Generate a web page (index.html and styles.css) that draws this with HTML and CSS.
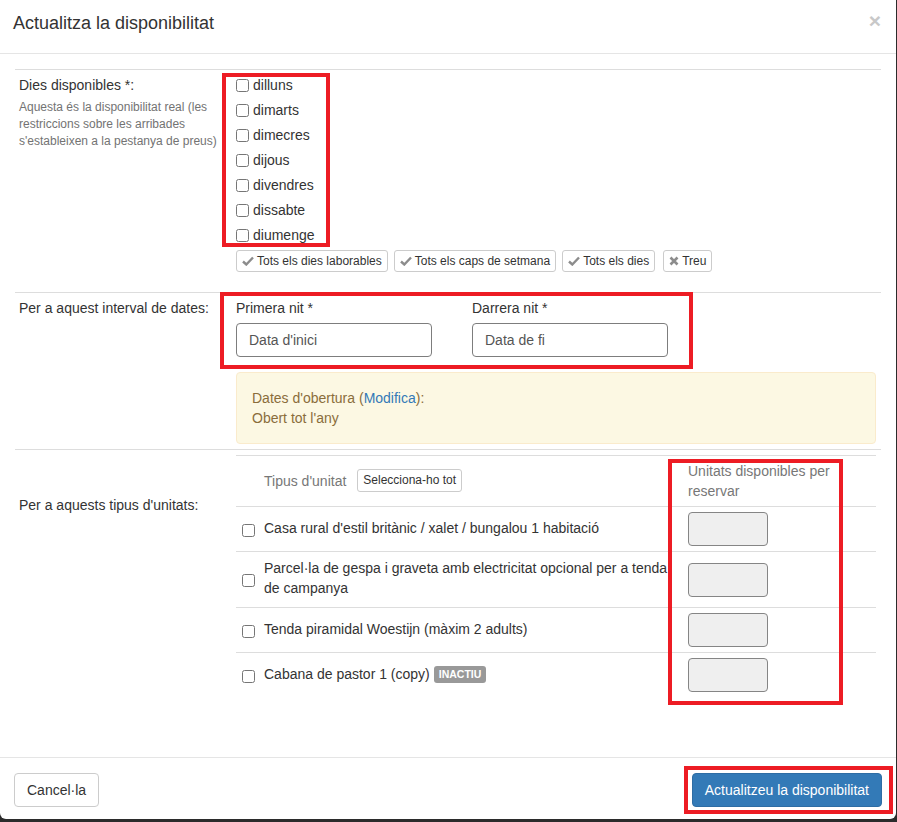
FILE: index.html
```html
<!DOCTYPE html>
<html lang="ca">
<head>
<meta charset="utf-8">
<title>Actualitza la disponibilitat</title>
<link rel="stylesheet" href="styles.css">
</head>
<body>
<div class="modal">
  <div class="modal-header">
    <h4 class="modal-title">Actualitza la disponibilitat</h4>
    <span class="close">&times;</span>
  </div>
  <div class="modal-body">
    <div class="form-row row-days">
      <div class="label-col">
        <div class="lbl">Dies disponibles *:</div>
        <div class="help">Aquesta és la disponibilitat real (les<br>restriccions sobre les arribades<br>s'estableixen a la pestanya de preus)</div>
      </div>
      <div class="field-col">
        <div class="days">
          <label class="day"><input type="checkbox"><span>dilluns</span></label>
          <label class="day"><input type="checkbox"><span>dimarts</span></label>
          <label class="day"><input type="checkbox"><span>dimecres</span></label>
          <label class="day"><input type="checkbox"><span>dijous</span></label>
          <label class="day"><input type="checkbox"><span>divendres</span></label>
          <label class="day"><input type="checkbox"><span>dissabte</span></label>
          <label class="day"><input type="checkbox"><span>diumenge</span></label>
          <div class="hl hl-days"></div>
        </div>
        <div class="quick">
          <button class="btn-xs"><svg class="ico" viewBox="0 0 12 10" width="12" height="10"><path d="M1 5.5 L4.3 8.5 L11 1.5" fill="none" stroke="#8c8c8c" stroke-width="2.4"/></svg>Tots els dies laborables</button>
          <button class="btn-xs"><svg class="ico" viewBox="0 0 12 10" width="12" height="10"><path d="M1 5.5 L4.3 8.5 L11 1.5" fill="none" stroke="#8c8c8c" stroke-width="2.4"/></svg>Tots els caps de setmana</button>
          <button class="btn-xs"><svg class="ico" viewBox="0 0 12 10" width="12" height="10"><path d="M1 5.5 L4.3 8.5 L11 1.5" fill="none" stroke="#8c8c8c" stroke-width="2.4"/></svg>Tots els dies</button>
          <button class="btn-xs btn-treu"><svg class="ico" viewBox="0 0 10 10" width="10" height="10"><path d="M1.5 1.5 L8.5 8.5 M8.5 1.5 L1.5 8.5" fill="none" stroke="#8c8c8c" stroke-width="2.6"/></svg>Treu</button>
        </div>
      </div>
    </div>

    <div class="form-row row-dates">
      <div class="label-col">
        <div class="lbl">Per a aquest interval de dates:</div>
      </div>
      <div class="field-col">
        <div class="dates">
          <div class="date-field">
            <div class="lbl">Primera nit *</div>
            <div class="input">Data d'inici</div>
          </div>
          <div class="date-field">
            <div class="lbl">Darrera nit *</div>
            <div class="input">Data de fi</div>
          </div>
          <div class="hl hl-dates"></div>
        </div>
        <div class="alert">
          <div>Dates d'obertura (<a class="link">Modifica</a>):</div>
          <div>Obert tot l'any</div>
        </div>
      </div>
    </div>

    <div class="form-row row-units">
      <div class="label-col">
        <div class="lbl units-lbl">Per a aquests tipus d'unitats:</div>
      </div>
      <div class="field-col">
        <div class="utable">
          <div class="urow uhead">
            <div class="c1"></div>
            <div class="c2 muted">Tipus d'unitat <button class="btn-sel">Selecciona-ho tot</button></div>
            <div class="c3 muted">Unitats disponibles per<br>reservar</div>
          </div>
          <div class="urow">
            <div class="c1"><input type="checkbox"></div>
            <div class="c2">Casa rural d'estil britànic / xalet / bungalou 1 habitació</div>
            <div class="c3"><div class="num"></div></div>
          </div>
          <div class="urow">
            <div class="c1"><input type="checkbox"></div>
            <div class="c2">Parcel·la de gespa i graveta amb electricitat opcional per a tenda de campanya</div>
            <div class="c3"><div class="num"></div></div>
          </div>
          <div class="urow">
            <div class="c1"><input type="checkbox"></div>
            <div class="c2">Tenda piramidal Woestijn (màxim 2 adults)</div>
            <div class="c3"><div class="num"></div></div>
          </div>
          <div class="urow">
            <div class="c1"><input type="checkbox"></div>
            <div class="c2">Cabana de pastor 1 (copy)<span class="badge">INACTIU</span></div>
            <div class="c3"><div class="num"></div></div>
          </div>
          <div class="hl hl-units"></div>
        </div>
      </div>
    </div>
  </div>
  <div class="modal-footer">
    <button class="btn btn-default">Cancel·la</button>
    <div class="primary-wrap">
      <button class="btn btn-primary">Actualitzeu la disponibilitat</button>
      <div class="hl hl-primary"></div>
    </div>
  </div>
</div>
</body>
</html>
```

FILE: styles.css
```css
html, body {
  margin: 0;
  padding: 0;
  background: #2b2b2b;
}
body {
  font-family: "Liberation Sans", Arial, Helvetica, sans-serif;
  font-size: 14px;
  line-height: 20px;
  color: #333;
}
* { box-sizing: border-box; }

.modal {
  width: 896px;
  height: 819px;
  background: #fff;
  border-radius: 0 0 6px 6px;
  overflow: hidden;
  display: flex;
  flex-direction: column;
}

.modal-header {
  height: 54px;
  flex: none;
  display: flex;
  justify-content: space-between;
  align-items: flex-start;
  padding: 10px 15px 0 13px;
  border-bottom: 1px solid #e5e5e5;
}
.modal-title {
  margin: 0;
  font-size: 18px;
  font-weight: normal;
  line-height: 26px;
  color: #333;
}
.close {
  font-size: 21px;
  font-weight: bold;
  line-height: 21px;
  color: #c8c8c8;
  margin-top: 0;
}

.modal-body {
  flex: 1;
  padding: 15px 15px 0 15px;
}

.form-row {
  display: flex;
  border-top: 1px solid #ddd;
  padding: 5px 5px 0 4px;
}
.label-col {
  width: 217px;
  flex: none;
}
.field-col {
  flex: 1;
  min-width: 0;
}
.lbl {
  line-height: 20px;
}
.help {
  margin-top: 4px;
  font-size: 12px;
  line-height: 17px;
  color: #737373;
}

/* days */
.row-days { padding-bottom: 20px; }
.days {
  position: relative;
}
.day {
  display: flex;
  align-items: center;
  height: 20px;
  margin-bottom: 5px;
}
.day:nth-child(7) { margin-bottom: 0; }
.day input {
  margin: 0 4px 0 0;
  width: 13px;
  height: 13px;
}
.quick {
  display: flex;
  gap: 6px;
  margin-top: 5px;
}
.btn-xs {
  font-family: inherit;
  font-size: 12px;
  line-height: 18px;
  padding: 1px 5px;
  background: #fff;
  color: #333;
  border: 1px solid #ccc;
  border-radius: 3px;
  display: inline-flex;
  align-items: center;
}
.btn-treu {
  margin-left: 2px;
}
.ico {
  margin-right: 3px;
}

/* dates */
.row-dates { padding-bottom: 5px; }
.dates {
  position: relative;
  display: flex;
}
.date-field {
  width: 236px;
}
.date-field .lbl {
  margin-bottom: 5px;
}
.input {
  width: 196px;
  height: 34px;
  border: 1px solid #7d7d7d;
  border-radius: 4px;
  padding: 6px 12px;
  color: #555;
  line-height: 20px;
}
.alert {
  margin-top: 15px;
  background: #fcf8e3;
  border: 1px solid #faebcc;
  border-radius: 4px;
  padding: 15px;
  color: #8a6d3b;
  line-height: 20px;
}
.link {
  color: #337ab7;
  text-decoration: none;
}

/* units */
.units-lbl {
  margin-top: 40px;
}
.utable {
  position: relative;
}
.urow {
  display: flex;
  align-items: center;
  border-top: 1px solid #ddd;
}
.c1 {
  width: 28px;
  flex: none;
  padding-left: 6px;
  display: flex;
  align-items: center;
}
.c1 input {
  margin: 2px 0 0 0;
  width: 13px;
  height: 13px;
}
.c2 {
  width: 424px;
  flex: none;
  padding: 6px 10px 9px 0;
}
.c3 {
  flex: 1;
  padding: 5px 0;
}
.muted {
  color: #777;
}
.uhead .c2 {
  display: flex;
  align-items: center;
  padding: 7px 10px 8px 0;
}
.btn-sel {
  margin-left: 11px;
  font-family: inherit;
  font-size: 12px;
  line-height: 17px;
  padding: 2px 5px;
  background: #fff;
  color: #333;
  border: 1px solid #ccc;
  border-radius: 3px;
}
.num {
  width: 80px;
  height: 34px;
  background: #efefef;
  border: 1px solid #858585;
  border-radius: 4px;
}
.badge {
  display: inline-block;
  margin-left: 4px;
  background: #999;
  color: #fff;
  font-size: 10.5px;
  font-weight: bold;
  line-height: 12px;
  padding: 2px 5px 3px;
  border-radius: 3px;
  vertical-align: 1px;
}

/* footer */
.modal-footer {
  flex: none;
  height: 62px;
  border-top: 1px solid #e5e5e5;
  padding: 15px 14px 0 14px;
  display: flex;
  justify-content: space-between;
  align-items: flex-start;
}
.btn {
  font-family: inherit;
  font-size: 14px;
  line-height: 20px;
  padding: 6px 12px;
  border: 1px solid #ccc;
  border-radius: 4px;
  background: #fff;
  color: #333;
}
.btn-primary {
  background: #337ab7;
  border-color: #2e6da4;
  color: #fff;
}
.primary-wrap {
  position: relative;
  display: flex;
}

/* red annotation boxes */
.hl {
  position: absolute;
  border: 4px solid #ed1c24;
  pointer-events: none;
}
.hl-days {
  left: -14px;
  top: -2px;
  width: 108px;
  height: 174px;
}
.hl-dates {
  left: -16px;
  top: -6px;
  width: 473px;
  height: 77px;
}
.hl-units {
  left: 432px;
  top: 4px;
  width: 175px;
  height: 246px;
}
.hl-primary {
  left: -8px;
  top: -7px;
  width: 209px;
  height: 48px;
}
```
